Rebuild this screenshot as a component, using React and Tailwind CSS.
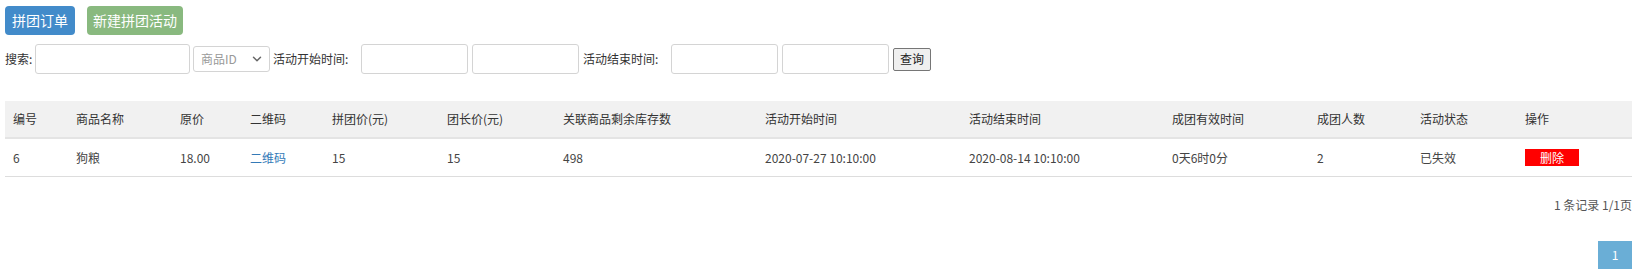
import React from "react";
import { ChevronDown } from "lucide-react";

const FONT = "font-['Noto_Sans_CJK_SC','Noto_Sans',sans-serif]";

const cols = [
  { label: "编号", w: "w-[63px]" },
  { label: "商品名称", w: "w-[104px]" },
  { label: "原价", w: "w-[70px]" },
  { label: "二维码", w: "w-[82px]" },
  { label: "拼团价(元)", w: "w-[115px]" },
  { label: "团长价(元)", w: "w-[116px]" },
  { label: "关联商品剩余库存数", w: "w-[202px]" },
  { label: "活动开始时间", w: "w-[204px]" },
  { label: "活动结束时间", w: "w-[203px]" },
  { label: "成团有效时间", w: "w-[145px]" },
  { label: "成团人数", w: "w-[103px]" },
  { label: "活动状态", w: "w-[105px]" },
  { label: "操作", w: "flex-1" },
];

const row = ["6", "狗粮", "18.00", "二维码", "15", "15", "498", "2020-07-27 10:10:00", "2020-08-14 10:10:00", "0天6时0分", "2", "已失效"];

const TextInput = ({ w }) => (
  <div className={`${w} h-[30px] shrink-0 rounded-[3px] border border-[#d4d4d4] bg-white`} />
);

export default function App() {
  return (
    <div className={`${FONT} text-[12px] text-[#333] bg-white w-[1640px] h-[272px] pl-[5px] pr-[8px] pt-[6px]`}>
      <div className="flex gap-[12px]">
        <button className="h-[29px] w-[70px] rounded-[4px] bg-[#428bca] text-white text-[14px]">拼团订单</button>
        <button className="h-[29px] w-[96px] rounded-[4px] bg-[#89b97f] text-white text-[14px]">新建拼团活动</button>
      </div>

      <div className="mt-[9px] flex items-center h-[30px]">
        <span className="w-[30px] shrink-0">搜索:</span>
        <TextInput w="w-[155px]" />
        <div className="ml-[3px] w-[77px] h-[26px] shrink-0 rounded-[3px] border border-[#d4d4d4] flex items-center justify-between pl-[7px] pr-[5px] text-[#999]">
          <span>商品ID</span>
          <ChevronDown size={14} strokeWidth={2.5} className="text-[#666]" />
        </div>
        <span className="ml-[3px] w-[88px] shrink-0">活动开始时间:</span>
        <TextInput w="w-[107px]" />
        <div className="w-[4px] shrink-0" />
        <TextInput w="w-[107px]" />
        <span className="ml-[4px] w-[88px] shrink-0">活动结束时间:</span>
        <TextInput w="w-[107px]" />
        <div className="w-[4px] shrink-0" />
        <TextInput w="w-[107px]" />
        <button className="ml-[4px] w-[38px] h-[23px] shrink-0 rounded-[2px] border border-[#767676] bg-[#efefef] text-[12px] font-normal text-[#222]">查询</button>
      </div>

      <div className="mt-[27px]">
        <div className="flex h-[38px] items-center bg-[#f1f1f1] border-b-2 border-[#e4e4e4]">
          {cols.map((c) => (
            <div key={c.label} className={`${c.w} shrink-0 px-[8px]`}>{c.label}</div>
          ))}
        </div>
        <div className="flex h-[38px] items-center border-b border-[#ddd]">
          {row.map((v, i) => (
            <div key={i} className={`${cols[i].w} shrink-0 px-[8px] ${i === 3 ? "text-[#337ab7]" : "text-[#444]"}`}>{v}</div>
          ))}
          <div className="flex-1 px-[8px]">
            <span className="inline-flex items-center justify-center w-[54px] h-[17px] bg-[#ff0000] text-white">删除</span>
          </div>
        </div>
      </div>

      <div className="mt-[19px] text-right text-[#555]">1 条记录 1/1页</div>
      <div className="mt-[27px] flex justify-end">
        <div className="w-[34px] h-[28px] bg-[#6aaed6] text-white flex items-center justify-center">1</div>
      </div>
    </div>
  );
}
